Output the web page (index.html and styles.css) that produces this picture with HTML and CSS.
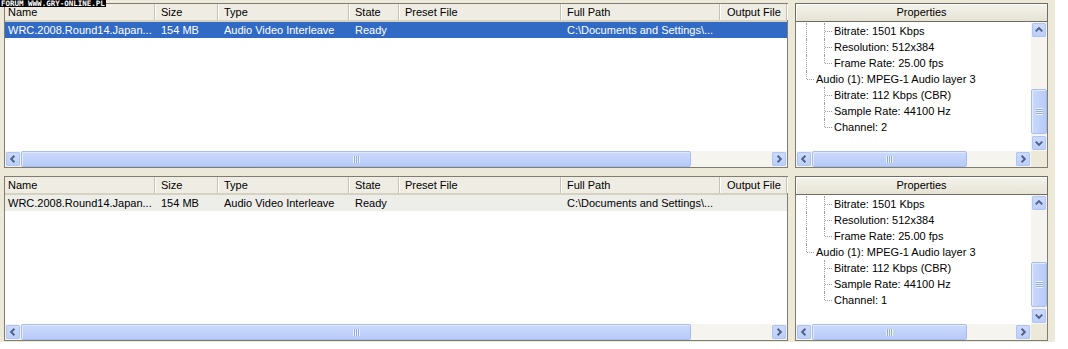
FILE: index.html
```html
<html>
  <head>
    <meta charset="UTF-8" />
    <meta name="viewport" content="width=device-width, initial-scale=1.0" />
    <link rel="stylesheet" href="styles.css">
  </head>
  <body>
    <div class="watermark">FORUM WWW.GRY-ONLINE.PL</div>
    <div class="app">
      <!-- top pair: selected file -->
      <div class="paneRow">
        <div class="list">
          <div class="listHead">
            <div class="col cName">Name</div>
            <div class="col cSize">Size</div>
            <div class="col cType">Type</div>
            <div class="col cState">State</div>
            <div class="col cPreset">Preset File</div>
            <div class="col cPath">Full Path</div>
            <div class="col cOut">Output File</div>
          </div>
          <div class="listBody">
            <div class="listRow selected">
              <div class="col cName">WRC.2008.Round14.Japan...</div>
              <div class="col cSize">154 MB</div>
              <div class="col cType">Audio Video Interleave</div>
              <div class="col cState">Ready</div>
              <div class="col cPreset"></div>
              <div class="col cPath">C:\Documents and Settings\...</div>
              <div class="col cOut"></div>
            </div>
          </div>
          <div class="hScroll">
            <div class="arrow"><svg viewBox="0 0 15 15"><polyline points="9,4 5.5,7.5 9,11" /></svg></div>
            <div class="thumbH listThumb"><span class="gripV"></span></div>
            <div class="track"></div>
            <div class="arrow"><svg viewBox="0 0 15 15"><polyline points="6,4 9.5,7.5 6,11" /></svg></div>
          </div>
        </div>
        <div class="props">
          <div class="propsHead">Properties</div>
          <div class="treeBox">
            <div class="tree">
              <div class="node"><span class="g line"></span><span class="g tee"></span><span class="label">Bitrate: 1501 Kbps</span></div>
              <div class="node"><span class="g line"></span><span class="g tee"></span><span class="label">Resolution: 512x384</span></div>
              <div class="node"><span class="g line"></span><span class="g elbow"></span><span class="label">Frame Rate: 25.00 fps</span></div>
              <div class="node"><span class="g elbow"></span><span class="label">Audio (1): MPEG-1 Audio layer 3</span></div>
              <div class="node"><span class="g"></span><span class="g tee"></span><span class="label">Bitrate: 112 Kbps (CBR)</span></div>
              <div class="node"><span class="g"></span><span class="g tee"></span><span class="label">Sample Rate: 44100 Hz</span></div>
              <div class="node"><span class="g"></span><span class="g elbow"></span><span class="label">Channel: 2</span></div>
            </div>
            <div class="vScroll">
              <div class="arrow"><svg viewBox="0 0 15 15"><polyline points="4,9 7.5,5.5 11,9" /></svg></div>
              <div class="vSpace"></div>
              <div class="thumbV"><span class="gripH"></span></div>
              <div class="arrow"><svg viewBox="0 0 15 15"><polyline points="4,6 7.5,9.5 11,6" /></svg></div>
            </div>
            <div class="hScroll">
              <div class="arrow"><svg viewBox="0 0 15 15"><polyline points="9,4 5.5,7.5 9,11" /></svg></div>
              <div class="thumbH treeThumb"><span class="gripV"></span></div>
              <div class="track"></div>
              <div class="arrow"><svg viewBox="0 0 15 15"><polyline points="6,4 9.5,7.5 6,11" /></svg></div>
            </div>
            <div class="corner"></div>
          </div>
        </div>
      </div>

      <!-- bottom pair: list without focus -->
      <div class="paneRow">
        <div class="list">
          <div class="listHead">
            <div class="col cName">Name</div>
            <div class="col cSize">Size</div>
            <div class="col cType">Type</div>
            <div class="col cState">State</div>
            <div class="col cPreset">Preset File</div>
            <div class="col cPath">Full Path</div>
            <div class="col cOut">Output File</div>
          </div>
          <div class="listBody">
            <div class="listRow inactive">
              <div class="col cName">WRC.2008.Round14.Japan...</div>
              <div class="col cSize">154 MB</div>
              <div class="col cType">Audio Video Interleave</div>
              <div class="col cState">Ready</div>
              <div class="col cPreset"></div>
              <div class="col cPath">C:\Documents and Settings\...</div>
              <div class="col cOut"></div>
            </div>
          </div>
          <div class="hScroll">
            <div class="arrow"><svg viewBox="0 0 15 15"><polyline points="9,4 5.5,7.5 9,11" /></svg></div>
            <div class="thumbH listThumb"><span class="gripV"></span></div>
            <div class="track"></div>
            <div class="arrow"><svg viewBox="0 0 15 15"><polyline points="6,4 9.5,7.5 6,11" /></svg></div>
          </div>
        </div>
        <div class="props">
          <div class="propsHead">Properties</div>
          <div class="treeBox">
            <div class="tree">
              <div class="node"><span class="g line"></span><span class="g tee"></span><span class="label">Bitrate: 1501 Kbps</span></div>
              <div class="node"><span class="g line"></span><span class="g tee"></span><span class="label">Resolution: 512x384</span></div>
              <div class="node"><span class="g line"></span><span class="g elbow"></span><span class="label">Frame Rate: 25.00 fps</span></div>
              <div class="node"><span class="g elbow"></span><span class="label">Audio (1): MPEG-1 Audio layer 3</span></div>
              <div class="node"><span class="g"></span><span class="g tee"></span><span class="label">Bitrate: 112 Kbps (CBR)</span></div>
              <div class="node"><span class="g"></span><span class="g tee"></span><span class="label">Sample Rate: 44100 Hz</span></div>
              <div class="node"><span class="g"></span><span class="g elbow"></span><span class="label">Channel: 1</span></div>
            </div>
            <div class="vScroll">
              <div class="arrow"><svg viewBox="0 0 15 15"><polyline points="4,9 7.5,5.5 11,9" /></svg></div>
              <div class="vSpace"></div>
              <div class="thumbV"><span class="gripH"></span></div>
              <div class="arrow"><svg viewBox="0 0 15 15"><polyline points="4,6 7.5,9.5 11,6" /></svg></div>
            </div>
            <div class="hScroll">
              <div class="arrow"><svg viewBox="0 0 15 15"><polyline points="9,4 5.5,7.5 9,11" /></svg></div>
              <div class="thumbH treeThumb"><span class="gripV"></span></div>
              <div class="track"></div>
              <div class="arrow"><svg viewBox="0 0 15 15"><polyline points="6,4 9.5,7.5 6,11" /></svg></div>
            </div>
            <div class="corner"></div>
          </div>
        </div>
      </div>
    </div>
  </body>
</html>
```

FILE: styles.css
```css
body {
  margin: 0;
  background-color: #ffffff;
  color: #000000;
  font-family: "Liberation Sans", Arial, sans-serif;
  font-size: 11px;
}

/* site stamp burned into the screenshot */
.watermark {
  position: absolute;
  left: 0;
  top: 0;
  z-index: 2;
  background-color: #000000;
  color: #ffffff;
  font: bold 7.5px/7px "DejaVu Sans Mono", monospace;
  padding: 0 1px;
  white-space: nowrap;
}

.app {
  width: 1055px;
  height: 342px;
  box-sizing: border-box;
  padding: 3px 0 0 4px;
  background-color: #ece9d8;
  display: flex;
  flex-direction: column;
  gap: 8px;
}

.paneRow {
  display: flex;
  gap: 7px;
  height: 165px;
}

/* list view */
.list {
  width: 784px;
  box-sizing: border-box;
  border: 1px solid #7f7d72;
  background-color: #ffffff;
  display: flex;
  flex-direction: column;
}

.listHead {
  display: flex;
  height: 18px;
  box-sizing: border-box;
  background-color: #efede3;
  border-bottom: 2px solid #d6d2c2;
}

.col {
  box-sizing: border-box;
  padding-left: 6px;
  white-space: nowrap;
  overflow: hidden;
  line-height: 16px;
}

.listHead .col {
  line-height: 17px;
  border-right: 1px solid #c5c2b2;
  box-shadow: 1px 0 0 #ffffff;
}

.cName {
  width: 150px;
  padding-left: 3px;
}
.cSize {
  width: 63px;
}
.cType {
  width: 131px;
}
.cState {
  width: 50px;
}
.cPreset {
  width: 162px;
}
.cPath {
  width: 159px;
}
.cOut {
  width: 67px;
  padding-left: 7px;
}

.listBody {
  flex: 1;
}

.listRow {
  display: flex;
  height: 16px;
}
.listRow .col {
  line-height: 16px;
}
.selected {
  background-color: #316ac5;
  color: #ffffff;
}
.inactive {
  background-color: #ededea;
}

/* XP style scroll bars */
.hScroll {
  display: flex;
  height: 16px;
  background-color: #f5f4ef;
}

.vScroll {
  display: flex;
  flex-direction: column;
  background-color: #f5f4ef;
}

.arrow {
  width: 16px;
  height: 16px;
  flex: none;
  box-sizing: border-box;
  border: 1px solid #f5f4ef;
}
.arrow svg {
  display: block;
  width: 14px;
  height: 14px;
  background: linear-gradient(#cddbfc, #bccef8);
  border-radius: 2px;
  box-shadow: inset 0 0 0 1px #b0c4f2;
}
.arrow polyline {
  fill: none;
  stroke: #4d6185;
  stroke-width: 2;
}

.track,
.vSpace {
  flex: 1;
}

.thumbH,
.thumbV {
  box-sizing: border-box;
  border: 1px solid #a8bdee;
  border-radius: 2px;
  background: linear-gradient(#cbd9fc, #b7cbf8);
  box-shadow: inset 1px 1px 0 #e2eafe;
  display: flex;
  align-items: center;
  justify-content: center;
}
.thumbH {
  height: 16px;
}
.listThumb {
  width: 670px;
}
.treeThumb {
  width: 155px;
}
.thumbV {
  height: 45px;
  margin-bottom: 1px;
  background: linear-gradient(90deg, #cbd9fc, #b7cbf8);
}

.gripV {
  width: 7px;
  height: 7px;
  background: repeating-linear-gradient(90deg, #eef3ff 0 1px, #8faae6 1px 2px);
}
.gripH {
  width: 7px;
  height: 7px;
  background: repeating-linear-gradient(#eef3ff 0 1px, #8faae6 1px 2px);
}

/* properties tree */
.props {
  width: 253px;
  display: flex;
  flex-direction: column;
}

.propsHead {
  height: 19px;
  box-sizing: border-box;
  border: 1px solid #6f6d62;
  background: linear-gradient(#f4f3ec, #e6e3d4);
  box-shadow: inset 1px 1px 0 #ffffff;
  text-align: center;
  line-height: 17px;
}

.treeBox {
  flex: 1;
  display: grid;
  grid-template-columns: 1fr 16px;
  grid-template-rows: 1fr 16px;
  border: 1px solid #7f7d72;
  border-top: none;
  background-color: #ffffff;
}

.tree {
  padding: 1px 0 0 1px;
  overflow: hidden;
}

.node {
  display: flex;
  height: 16px;
  line-height: 16px;
  white-space: nowrap;
}

.g {
  width: 18px;
  height: 16px;
  flex: none;
  position: relative;
}
.g.line::before,
.g.tee::before,
.g.elbow::before {
  content: "";
  position: absolute;
  left: 9px;
  top: 0;
  border-left: 1px dotted #9d9d9d;
}
.g.line::before,
.g.tee::before {
  height: 16px;
}
.g.elbow::before {
  height: 8px;
}
.g.tee::after,
.g.elbow::after {
  content: "";
  position: absolute;
  left: 10px;
  top: 8px;
  width: 7px;
  border-top: 1px dotted #9d9d9d;
}

.label {
  margin-left: 1px;
}

.corner {
  background-color: #ece9d8;
}
```
